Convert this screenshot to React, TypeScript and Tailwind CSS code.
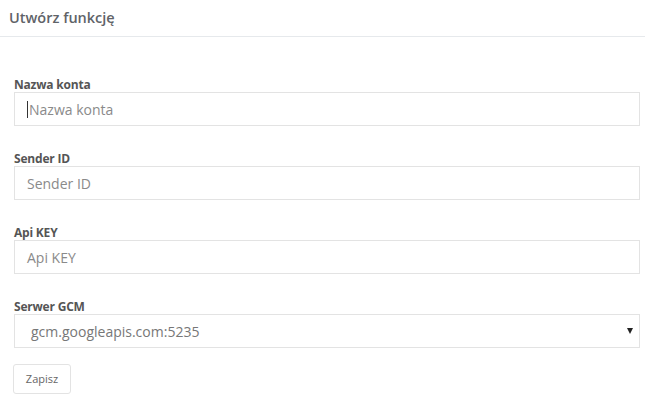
const font = { fontFamily: '"Open Sans", "Liberation Sans", sans-serif' };

function Field({ label, placeholder, caret }: { label: string; placeholder: string; caret?: boolean }) {
  return (
    <div className="flex flex-col">
      <label className="text-[12px] font-bold leading-[15px] tracking-[-0.2px] text-[#555555]">{label}</label>
      <div className="flex h-[34px] items-center border border-[#e3e3e3] bg-white pl-[12px] text-[14px] text-[#8a8a8a]">
        {caret && <span className="mr-[1px] h-[17px] w-px bg-[#333]" />}
        <span>{placeholder}</span>
      </div>
    </div>
  );
}

export default function App() {
  return (
    <div className="h-[409px] w-[645px] bg-white" style={font}>
      <div className="flex h-[37px] items-center border-b border-[#e6e9ec] pl-[9px]">
        <h3 className="text-[14.5px] font-semibold text-[#5f6368]">Utwórz funkcję</h3>
      </div>
      <div className="flex flex-col gap-[25px] pl-[14px] pr-[5px] pt-[40px]">
        <Field label="Nazwa konta" placeholder="Nazwa konta" caret />
        <Field label="Sender ID" placeholder="Sender ID" />
        <Field label="Api KEY" placeholder="Api KEY" />
        <div className="flex flex-col">
          <label className="text-[12px] font-bold leading-[15px] tracking-[-0.2px] text-[#555555]">Serwer GCM</label>
          <div className="flex h-[34px] items-center justify-between border border-[#e3e3e3] bg-white pl-[16px] pr-[6px] text-[14px] text-[#777777]">
            <span>gcm.googleapis.com:5235</span>
            <svg width="6" height="6" viewBox="0 0 6 6">
              <path d="M0 0 H6 L3 6 Z" fill="#222" />
            </svg>
          </div>
        </div>
      </div>
      <div className="pl-[13px] pt-[16px]">
        <button className="h-[30px] w-[58px] rounded-[3px] border border-[#e3e3e3] bg-white text-[11px] text-[#666]">
          Zapisz
        </button>
      </div>
    </div>
  );
}
